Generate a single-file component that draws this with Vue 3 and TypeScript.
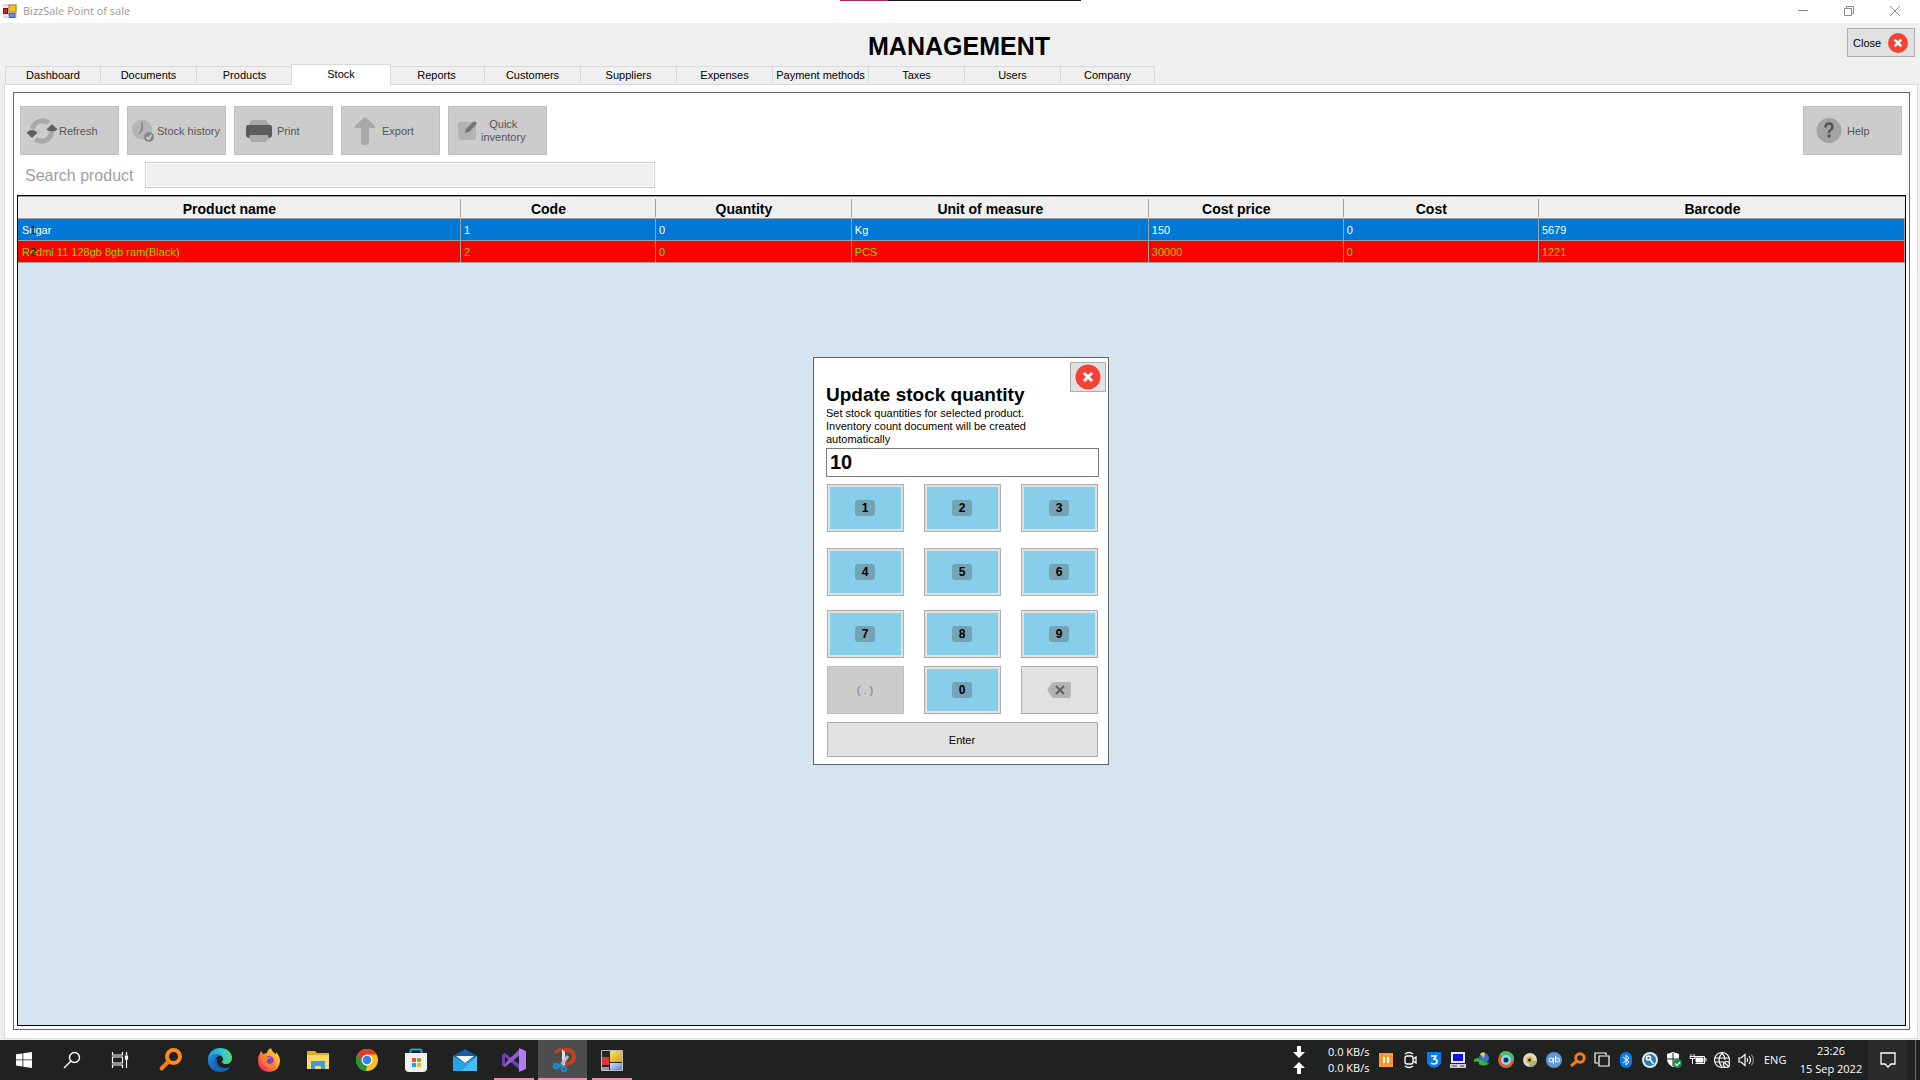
<script setup lang="ts">
import { ref } from 'vue'

interface Column {
  key: string
  label: string
  width: string
}

interface Product {
  name: string
  code: string
  quantity: string
  unit: string
  price: string
  cost: string
  barcode: string
  state: 'selected' | 'low'
}

const tabs = [
  'Dashboard', 'Documents', 'Products', 'Stock', 'Reports', 'Customers',
  'Suppliers', 'Expenses', 'Payment methods', 'Taxes', 'Users', 'Company',
]
const activeTab = ref('Stock')

const columns: Column[] = [
  { key: 'name', label: 'Product name', width: '23.47%' },
  { key: 'code', label: 'Code', width: '10.34%' },
  { key: 'quantity', label: 'Quantity', width: '10.38%' },
  { key: 'unit', label: 'Unit of measure', width: '15.74%' },
  { key: 'price', label: 'Cost price', width: '10.33%' },
  { key: 'cost', label: 'Cost', width: '10.34%' },
  { key: 'barcode', label: 'Barcode', width: '19.4%' },
]

const products: Product[] = [
  { name: 'Sugar', code: '1', quantity: '0', unit: 'Kg', price: '150', cost: '0', barcode: '5679', state: 'selected' },
  { name: 'Redmi 11 128gb 8gb ram(Black)', code: '2', quantity: '0', unit: 'PCS', price: '30000', cost: '0', barcode: '1221', state: 'low' },
]

const search = ref('')
const quantity = ref('10')
const keys = ['1', '2', '3', '4', '5', '6', '7', '8', '9', '.', '0', 'back']

function press(key: string) {
  quantity.value = key === 'back' ? quantity.value.slice(0, -1) : quantity.value + key
}

function cell(product: Product, key: string): string {
  return product[key as keyof Product]
}
</script>

<template>
  <div class="desktop">
    <div class="capture-strip"></div>

    <header class="titlebar">
      <svg class="app-icon" width="14" height="14" viewBox="0 0 14 14">
        <rect x="0" y="0" width="14" height="14" fill="#d8d8d8" />
        <rect x="6" y="1" width="7" height="7" fill="#f3c22b" stroke="#a98216" />
        <rect x="0.500" y="4.500" width="4" height="5" fill="#d8232a" stroke="#7c1014" />
        <rect x="6" y="9.500" width="6" height="4" fill="#5b8fe8" stroke="#3961b0" />
        <path d="M0 3h5M0 11h5v3" fill="none" stroke="#fff" />
      </svg>
      <span class="titlebar-text">BizzSale Point of sale</span>
      <button class="win-btn" aria-label="Minimize">
        <svg width="12" height="12" viewBox="0 0 12 12"><path d="M1 5.500h10" stroke="#8a8a8a" /></svg>
      </button>
      <button class="win-btn" aria-label="Restore">
        <svg width="12" height="12" viewBox="0 0 12 12" fill="none" stroke="#8a8a8a"><path d="M1.500 3.500h7v7h-7zM3.500 3.500v-2h7v7h-2" /></svg>
      </button>
      <button class="win-btn" aria-label="Close window">
        <svg width="12" height="12" viewBox="0 0 12 12"><path d="M1 1l10 10M11 1L1 11" stroke="#8a8a8a" /></svg>
      </button>
    </header>

    <div class="heading">
      <h1>MANAGEMENT</h1>
      <button class="close-btn">
        <span>Close</span>
        <svg width="20" height="20" viewBox="0 0 24 24">
          <circle cx="12" cy="12" r="12" fill="#f44336" />
          <path d="M8 8l8 8M16 8l-8 8" stroke="#fff" stroke-width="3" />
        </svg>
      </button>
    </div>

    <nav class="tabs" role="tablist">
      <button
        v-for="tab in tabs"
        :key="tab"
        role="tab"
        :aria-selected="tab === activeTab"
        :class="['tab', { active: tab === activeTab }]"
        @click="activeTab = tab"
      >{{ tab }}</button>
    </nav>

    <main class="page">
      <section class="panel">
        <div class="toolbar">
          <button class="tool refresh" disabled>
            <svg width="28" height="28" viewBox="0 0 28 28" fill="none">
              <path d="M4.500 12a10 10 0 0 1 16-6" stroke="#a8a8a8" stroke-width="5" />
              <path d="M23.500 15a10 10 0 0 1-16 7" stroke="#a8a8a8" stroke-width="5" />
              <path d="M-1 15q5-4 10 0q1 1-1 2l-3 3q-1 1-2 0l-3-3q-2-1-1-2z" fill="#606060" />
              <path d="M19 13q-1-1 1-2l3-3q1-1 2 0l3 3q2 1 1 2q-5 3-10 0z" fill="#606060" />
            </svg>
            <span>Refresh</span>
          </button>
          <button class="tool history" disabled>
            <svg width="28" height="28" viewBox="0 0 28 28" fill="none">
              <circle cx="13" cy="12.500" r="10" fill="#b5b5b5" />
              <path d="M13 5.500v7.500l-3 4" stroke="#8c8c8c" stroke-width="2" />
              <circle cx="20" cy="20" r="5" fill="#858585" />
              <path d="M17.500 20l2 2 3-4" stroke="#ccc" stroke-width="2" />
            </svg>
            <span>Stock history</span>
          </button>
          <button class="tool print" disabled>
            <svg width="28" height="28" viewBox="0 0 28 28">
              <path d="M7 3h14l3 4v3H4V7z" fill="#a8a8a8" />
              <path d="M2 8h24l1 2v9l-2 2H3l-2-2v-9z" fill="#5c5c5c" />
              <path d="M5 18h18l1 3-3 4H7l-3-4z" fill="#a8a8a8" />
            </svg>
            <span>Print</span>
          </button>
          <button class="tool export" disabled>
            <svg width="28" height="28" viewBox="0 0 28 28">
              <path d="M12.500 1q1.500-1 3 0L24 9q1 2-1 2h-5v14q-.500 3-4 3t-4-3V11H5q-2 0-1-2z" fill="#a8a8a8" />
            </svg>
            <span>Export</span>
          </button>
          <button class="tool inventory" disabled>
            <svg width="28" height="28" viewBox="0 0 28 28">
              <rect x="5" y="5" width="18" height="18" rx="3" fill="#b3b3b3" />
              <path d="M12 16l1-4 7-7q2-1 3 0t0 3l-7 7z" fill="#757575" />
            </svg>
            <span>Quick<br>inventory</span>
          </button>
          <button class="tool help" disabled>
            <svg width="28" height="28" viewBox="0 0 28 28" fill="none">
              <circle cx="14" cy="13.500" r="12.500" fill="#a3a3a3" />
              <path d="M10.500 10.500q0-4 3.500-4t3.500 3.500q0 2-2 3-1.500 1-1.500 3" stroke="#555" stroke-width="2.500" />
              <circle cx="14" cy="19" r="1.700" fill="#555" />
            </svg>
            <span>Help</span>
          </button>
        </div>

        <div class="search">
          <label for="product-search">Search product</label>
          <input id="product-search" v-model="search" type="text" disabled>
        </div>

        <div class="grid">
          <table>
            <colgroup>
              <col v-for="column in columns" :key="column.key" :style="{ width: column.width }">
            </colgroup>
            <thead>
              <tr>
                <th v-for="column in columns" :key="column.key" scope="col"><div>{{ column.label }}</div></th>
              </tr>
            </thead>
            <tbody>
              <tr v-for="(product, index) in products" :key="product.code" :class="product.state">
                <td v-for="(column, c) in columns" :key="column.key">
                  {{ cell(product, column.key) }}<span v-if="c === 0" class="row-number">{{ index + 1 }}</span>
                </td>
              </tr>
            </tbody>
          </table>
        </div>
      </section>
    </main>

    <div class="dialog" role="dialog" aria-labelledby="dialog-title">
      <div class="dialog-head">
        <h2 id="dialog-title">Update stock quantity</h2>
        <button class="dialog-close" aria-label="Close">
          <svg width="26" height="26" viewBox="0 0 26 26">
            <circle cx="13" cy="13" r="12.500" fill="#f44336" />
            <path d="M9 9l8 8M17 9l-8 8" stroke="#fff" stroke-width="3" />
          </svg>
        </button>
      </div>
      <p>Set stock quantities for selected product. Inventory count document will be created automatically</p>
      <input v-model="quantity" class="quantity" type="text" aria-label="Quantity">
      <div class="keypad">
        <button
          v-for="key in keys"
          :key="key"
          :class="['key', { digit: key !== '.' && key !== 'back' }]"
          :disabled="key === '.'"
          :aria-label="key === 'back' ? 'Backspace' : undefined"
          @click="press(key)"
        >
          <svg v-if="key === 'back'" width="24" height="16" viewBox="0 0 24 16">
            <path d="M7 0h14q3 0 3 3v10q0 3-3 3H7q-1 0-2-1L1 9.500q-1-1.500 0-3L5 1q1-1 2-1z" fill="#b3b3b3" />
            <path d="M9 4l8 8M17 4l-8 8" stroke="#5f5f5f" stroke-width="2" />
          </svg>
          <template v-else-if="key === '.'">( . )</template>
          <span v-else class="cap">{{ key }}</span>
        </button>
      </div>
      <button class="enter">Enter</button>
    </div>

    <footer class="taskbar">
      <button class="sys" aria-label="Start">
        <svg width="16" height="16" viewBox="0 0 16 16" fill="#fff"><path d="M0 2.300l6.500-.9v6.100H0zM7.300 1.300L16 0v7.500H7.300zM0 8.300h6.500v6.200L0 13.600zM7.300 8.300H16V16l-8.700-1.300z" /></svg>
      </button>
      <button class="sys" aria-label="Search">
        <svg width="18" height="18" viewBox="0 0 18 18" fill="none" stroke="#fff" stroke-width="1.400"><circle cx="11.500" cy="6.500" r="5" /><path d="M8 10l-7 7" /></svg>
      </button>
      <button class="sys" aria-label="Task view">
        <svg width="18" height="18" viewBox="0 0 18 18" fill="none" stroke="#fff" stroke-width="1.200"><path d="M1.500 1v3h10V1M1.500 17v-3h10v3M1.500 6h10v6h-10zM15.500 1v3M15.500 8v9" /><rect x="14.500" y="5" width="2" height="3" fill="#fff" /></svg>
      </button>
      <button class="app" aria-label="Everything">
        <svg width="24" height="24" viewBox="0 0 24 24" fill="none"><circle cx="14.500" cy="8.500" r="6.500" stroke="#ff8a1c" stroke-width="4" /><path d="M9.500 13.500l-7 7" stroke="#ff7a0c" stroke-width="4" stroke-linecap="round" /></svg>
      </button>
      <button class="app" aria-label="Edge">
        <svg width="24" height="24" viewBox="0 0 24 24">
          <defs>
            <linearGradient id="edge-top" x1="0" y1="0" x2="1" y2="0"><stop offset="0" stop-color="#1b9de2" /><stop offset=".6" stop-color="#2fc6d0" /><stop offset="1" stop-color="#62d765" /></linearGradient>
            <linearGradient id="edge-low" x1="0" y1="0" x2="1" y2="1"><stop offset="0" stop-color="#1b8be0" /><stop offset="1" stop-color="#0f4f9c" /></linearGradient>
          </defs>
          <path d="M0 12C0 4 6 0 12 0c8 0 12 5 12 10 0 4-3 6-6 6-2 0-4-.5-4-2 0-.8 1-1 1-3 0-2-2-4-5-4-5 0-9 3-10 8z" fill="url(#edge-top)" />
          <path d="M0 13c1-5 5-7 9-7 2 0 4 1 5 2-4-1-7 2-7 6 0 5 5 8 9 8 3 0 5-2 6-3-2 4-6 5-10 5C5 24 0 19 0 13z" fill="url(#edge-low)" />
          <path d="M9 13c0 5 4 7 8 7 2 0 4-.7 5-1-2 3-6 5-10 4.500C7 22 5 16 8 11c.5-1 1-1 1 2z" fill="#1765b8" />
        </svg>
      </button>
      <button class="app" aria-label="Firefox">
        <svg width="24" height="24" viewBox="0 0 24 24">
          <defs><linearGradient id="fox" x1="1" y1="0" x2="0" y2="1"><stop offset="0" stop-color="#ffe94a" /><stop offset=".45" stop-color="#ff9a2a" /><stop offset=".8" stop-color="#ff3b50" /><stop offset="1" stop-color="#e31587" /></linearGradient></defs>
          <path d="M3 5l1-2 2 3 4-1q0-3 4-5 1 4 5 6l0-2q4 4 4 9 0 10-11 11Q1 23 1 13q0-5 2-8z" fill="url(#fox)" />
          <circle cx="12" cy="13" r="5" fill="#7a43d8" />
          <path d="M4 9q4-2 6 0 3-1 4 1-3 0-4 2-1 4 3 4 4-1 4-5 3 8-5 9-7 0-8-11z" fill="#ff7a32" />
        </svg>
      </button>
      <button class="app" aria-label="File Explorer">
        <svg width="24" height="24" viewBox="0 0 24 24"><path d="M1 3h8l2 2h12v16H1z" fill="#e9a821" /><path d="M1 7h22v14H1z" fill="#ffd767" /><path d="M5 21v-8h14v8h-4v-3H9v3z" fill="#3d9be0" /></svg>
      </button>
      <button class="app" aria-label="Chrome">
        <svg width="24" height="24" viewBox="0 0 24 24">
          <circle cx="12" cy="12" r="11" fill="#fbc116" />
          <path d="M2.500 6.500A11 11 0 0 1 21.500 6.500H12L7 14z" fill="#e33b2e" />
          <path d="M2.500 6.500L8 15l4 3-1 5A11 11 0 0 1 2.500 6.500z" fill="#229342" />
          <circle cx="12" cy="12" r="5.500" fill="#fff" /><circle cx="12" cy="12" r="4.300" fill="#3b7de8" />
        </svg>
      </button>
      <button class="app" aria-label="Store">
        <svg width="24" height="24" viewBox="0 0 24 24"><path d="M6.500 6V2.500q0-1 1-1h9q1 0 1 1V6" fill="none" stroke="#2c9bd8" stroke-width="2" /><path d="M1 5h22v15q0 4-4 4H5q-4 0-4-4z" fill="#f1f1f1" /><path d="M8 10h4v4H8z" fill="#f04e23" /><path d="M13 10h4v4h-4z" fill="#7db82a" /><path d="M8 15h4v4H8z" fill="#1ca3e6" /><path d="M13 15h4v4h-4z" fill="#f7b614" /></svg>
      </button>
      <button class="app" aria-label="Mail">
        <svg width="24" height="24" viewBox="0 0 24 24"><path d="M0 8l12-7 12 7v5H0z" fill="#1160ae" /><path d="M0 8l12 7 12-7v15H0z" fill="#28a0e8" /><path d="M24 8L8 23h16z" fill="#47bdf2" /><path d="M3 8h18l-9 7z" fill="#f7f7f7" /></svg>
      </button>
      <button class="app running" aria-label="Visual Studio">
        <svg width="24" height="24" viewBox="0 0 24 24"><path d="M0 7l3-2 15 12v5L3 9v7l-3 1z" fill="#6d3fb0" /><path d="M0 17l3 2L18 7V1L6 12l-3 4z" fill="#8d5bd0" /><path d="M17 0l7 3v18l-7 3z" fill="#b57cf2" /></svg>
      </button>
      <button class="app running current" aria-label="Snipping Tool">
        <svg width="24" height="24" viewBox="0 0 24 24" fill="none"><path d="M13 2.500a7 7 0 1 1 1 13" stroke="#c8401e" stroke-width="4" /><path d="M4 5q3-4 8-3" stroke="#c8401e" stroke-width="3" /><path d="M11 1l3 3v13l-3 1z" fill="#e4e4e4" /><path d="M17 8l-7 9" stroke="#bdbdbd" stroke-width="3" /><path d="M11 16l-5 3" stroke="#2089d0" stroke-width="3" /><circle cx="5" cy="18" r="2" stroke="#2089d0" stroke-width="2.500" /><circle cx="13" cy="21" r="2.300" stroke="#2089d0" stroke-width="2" /></svg>
      </button>
      <button class="app running" aria-label="BizzSale">
        <svg width="24" height="24" viewBox="0 0 24 24">
          <defs>
            <linearGradient id="form-yellow" x1="0" y1="0" x2="1" y2="1"><stop offset="0" stop-color="#fbe27a" /><stop offset="1" stop-color="#d99e08" /></linearGradient>
            <linearGradient id="form-blue" x1="0" y1="0" x2="1" y2="1"><stop offset="0" stop-color="#d5e2fb" /><stop offset="1" stop-color="#4f7fe0" /></linearGradient>
          </defs>
          <path d="M1.500 2.500h21v20h-21z" fill="#26292a" stroke="#bcbcbc" />
          <path d="M10 3h12v11H10z" fill="url(#form-yellow)" />
          <path d="M2 9h7v8H2z" fill="#d93636" />
          <path d="M10 15h12v7H10z" fill="url(#form-blue)" />
          <path d="M2 19h7v3H2z" fill="#9a9a9a" />
        </svg>
      </button>

      <div class="net">
        <svg width="12" height="28" viewBox="0 0 12 28" fill="#fff"><path d="M4 0h4v6h4l-6 6-6-6h4z" /><path d="M4 28h4v-6h4l-6-6-6 6h4z" /></svg>
        <div><span>0.0 KB/s</span><span>0.0 KB/s</span></div>
      </div>
      <div class="tray">
        <svg viewBox="0 0 16 16"><path d="M1 1h14v14H1z" fill="#f59a2f" /><path d="M6 5v6M10 5v6" stroke="#fff" stroke-width="2" /></svg>
        <svg viewBox="0 0 16 16" fill="none" stroke="#fff" stroke-width="1.300"><rect x="3" y="4" width="8" height="8" rx="2" /><path d="M11 7l3-2v6l-3-2M3 2q4-3 8 0M3 14q4 3 8 0" /></svg>
        <svg viewBox="0 0 16 16"><path d="M1 0h14v11q-2 4-7 5-5-1-7-5z" fill="#0a7cf0" /><path d="M5 4h5L8 7q3 0 3 2.500T8 12q-2 0-3-1" fill="none" stroke="#fff" stroke-width="1.500" /></svg>
        <svg viewBox="0 0 16 16"><path d="M1 0h14v11H1z" fill="#e8e8e8" /><path d="M3 2h10v7H3z" fill="#0b12e0" /><path d="M0 12h16v4H0z" fill="#d0d0d8" /><path d="M2 14h5M10 14h4" stroke="#444" /></svg>
        <svg viewBox="0 0 16 16"><circle cx="10" cy="6" r="5" fill="#3a6fd0" /><path d="M6 2q3-3 5-1l-1 5z" fill="#f6d33a" /><path d="M0 8q4-4 5-1l3 1q5 4 8 2-4 5-9 3-3 0-2-3-3-1-5 0z" fill="#3eb33a" /></svg>
        <svg viewBox="0 0 16 16" fill="none"><circle cx="8" cy="8" r="6" stroke="#e8593a" stroke-width="4" /><path d="M3 4a6 6 0 0 1 11 4" stroke="#53b96a" stroke-width="4" /><circle cx="8" cy="8" r="5" fill="#7fe0ee" /><circle cx="8" cy="8" r="2.500" fill="#152b55" /></svg>
        <svg viewBox="0 0 16 16"><circle cx="8" cy="8" r="7" fill="#dcdccc" /><path d="M8 8l7 1a7 7 0 0 1-8 6z" fill="#aaa893" /><circle cx="7.500" cy="8" r="3.500" fill="#d9b72e" /><circle cx="7.500" cy="8" r="1.500" fill="#222" /></svg>
        <svg viewBox="0 0 16 16"><circle cx="8" cy="8" r="8" fill="#5f96d8" /><circle cx="5" cy="8" r="2" fill="none" stroke="#fff" /><path d="M7.500 6v6M9.500 4v6" stroke="#fff" /><circle cx="11.500" cy="8" r="2" fill="none" stroke="#fff" /></svg>
        <svg viewBox="0 0 16 16" fill="none" stroke="#f57c1a" stroke-width="3"><circle cx="10" cy="6" r="4.200" /><path d="M7 9l-6 5" /></svg>
        <svg viewBox="0 0 16 16" fill="none" stroke="#fff" stroke-width="1.200"><path d="M5 4h10v10H5zM4 11H1V1h11v2" /></svg>
        <svg viewBox="0 0 16 16" fill="none"><rect x="2" y="0" width="12" height="16" rx="6" fill="#0a7cf0" /><path d="M5 5l6 5-3 3V3l3 3-6 5" stroke="#fff" /></svg>
        <svg viewBox="0 0 16 16" fill="none"><circle cx="8" cy="8" r="8" fill="#d9e8f0" /><circle cx="8" cy="8" r="6" fill="#2b78b8" /><circle cx="6.500" cy="6" r="2" stroke="#fff" stroke-width="1.500" /><path d="M8 7.500l3.500 4.500" stroke="#fff" stroke-width="1.500" /></svg>
        <svg viewBox="0 0 16 16"><path d="M7 0l6 2v6q-1 5-6 7-5-2-6-7V2z" fill="#fff" /><path d="M7 1v13M1 7h12" stroke="#222" /><circle cx="11.500" cy="11.500" r="4.500" fill="#15913e" /><path d="M9 11.500l2 2 3-3.500" fill="none" stroke="#fff" stroke-width="1.300" /></svg>
        <svg viewBox="0 0 16 16" fill="none" stroke="#fff"><path d="M4.500 4.500h10v7h-9M14.500 6.500h1.500v3" /><path d="M6 6h7v4H6z" fill="#fff" /><path d="M1 2v2M4 2v2M0 4.500h5v2H0zM2.500 7v5" /></svg>
        <svg viewBox="0 0 16 16" fill="none" stroke="#fff" stroke-width="1.200"><circle cx="8" cy="8" r="7.500" /><path d="M1 6h14M1 10h9M8 1q-6 7 0 14M8 1q3 3 3 7" /><circle cx="12.500" cy="12.500" r="3" fill="#1f2221" /><path d="M10.500 10.500l4 4" /></svg>
        <svg viewBox="0 0 16 16" fill="none" stroke="#fff" stroke-width="1.200"><path d="M1 6h2l4-3.500v11L3 10H1zM9 6q1.500 2 0 4M11 4q3 4 0 8" /><path d="M13.500 2.500q4 5.500 0 11" stroke="#888" /></svg>
      </div>
      <span class="lang">ENG</span>
      <div class="clock"><span>23:26</span><span>15 Sep 2022</span></div>
      <button class="notify" aria-label="Notifications">
        <svg width="16" height="16" viewBox="0 0 16 16" fill="none" stroke="#fff" stroke-width="1.300"><path d="M1 1h14v11h-4l-3 3-3-3H1z" /></svg>
      </button>
      <div class="peek"></div>
    </footer>
  </div>
</template>

<style>
body {
  margin: 0;
}
</style>

<style scoped>
.desktop {
  position: relative;
  display: flex;
  flex-direction: column;
  min-height: 100vh;
  box-sizing: border-box;
  background: #efefef;
  color: #000;
  font: 11px/13px "Liberation Sans", sans-serif;
}

.desktop * {
  box-sizing: border-box;
}

svg {
  display: block;
  flex: none;
  overflow: visible;
}

button,
input {
  margin: 0;
  padding: 0;
  border: 0;
  border-radius: 0;
  background: none;
  color: inherit;
  font: inherit;
}

h1,
h2,
p {
  margin: 0;
}

.capture-strip {
  position: absolute;
  top: 0;
  left: calc(50% - 120px);
  width: 241px;
  height: 1px;
  background: linear-gradient(90deg, #b3205a 48px, #1a1418 48px);
}

.titlebar {
  display: flex;
  align-items: center;
  height: 23px;
  padding: 0 2px 1px 3px;
  background: #fff;
}

.titlebar-text {
  flex: 1;
  padding-left: 6px;
  color: #999;
  font: 11px/16px "Open Sans", sans-serif;
}

.win-btn {
  display: flex;
  align-items: center;
  justify-content: center;
  width: 46px;
  height: 20px;
}

.heading {
  display: grid;
  grid-template-columns: 1fr auto 1fr;
  align-items: start;
  height: 41px;
  padding: 5px 5px 0 3px;
}

h1 {
  grid-column: 2;
  font-size: 25px;
  line-height: 36px;
}

.close-btn {
  display: flex;
  align-items: center;
  justify-content: space-between;
  justify-self: end;
  width: 68px;
  height: 29px;
  padding: 1px 6px 0 5px;
  border: 1px solid #adadad;
  background: #e1e1e1;
}

.tabs {
  display: flex;
  align-items: flex-end;
  height: 21px;
  padding-left: 5px;
  z-index: 1;
}

.tab {
  width: 96px;
  height: 19px;
  border: 1px solid #d9d9d9;
  border-left: 0;
  white-space: nowrap;
}

.tab:first-child {
  border-left: 1px solid #d9d9d9;
}

.tab:last-child {
  width: 94px;
}

.tab.active {
  position: relative;
  width: 100px;
  height: 21px;
  margin: 0 -2px;
  padding-bottom: 1px;
  border-left: 1px solid #d9d9d9;
  border-bottom: 0;
  background: #fff;
}

.page {
  display: flex;
  flex: 1;
  margin: -1px 2px 1px 4px;
  padding: 7px 7px 8px 8px;
  border: 1px solid #dcdcdc;
  background: #fff;
}

.panel {
  display: flex;
  flex: 1;
  flex-direction: column;
  padding: 13px 3px 3px;
  border: 1px solid #646464;
}

.toolbar {
  display: flex;
  gap: 8px;
  padding: 0 4px 0 3px;
}

.tool {
  display: flex;
  align-items: center;
  gap: 4px;
  width: 99px;
  height: 49px;
  padding: 0 0 0 10px;
  border: 1px solid #bfbfbf;
  background: #ccc;
  color: #555;
  text-align: center;
}

.tool span {
  padding-top: 1px;
}

.tool.refresh {
  gap: 3px;
  padding-left: 7px;
}

.tool.history {
  gap: 0;
  padding-left: 1px;
}

.tool.export {
  gap: 3px;
  padding-left: 9px;
}

.tool.inventory {
  gap: 0;
  padding-left: 4px;
}

.tool.help {
  margin-left: auto;
  padding-left: 11px;
}

.search {
  display: flex;
  align-items: center;
  margin-top: 7px;
}

.search label {
  width: 128px;
  padding: 1px 0 0 8px;
  color: #a0a0a0;
  font-size: 16px;
  line-height: 20px;
}

.search input {
  width: 510px;
  height: 26px;
  border: 1px solid #ccc;
  background: #efefef;
  box-shadow: inset 0 0 0 1px #fff;
}

.grid {
  flex: 1;
  margin-top: 7px;
  border: 1px solid #000;
  background: #d6e4f1;
}

table {
  width: 100%;
  table-layout: fixed;
  border-collapse: separate;
  border-spacing: 0;
}

th {
  height: 23px;
  padding: 0;
  border-top: 1px solid #a0a0a0;
  border-bottom: 1px solid #a0a0a0;
  background: #efefef;
  font-size: 14px;
  line-height: 16px;
}

th div {
  padding: 2px 19px 0 0;
  border-right: 1px solid #a0a0a0;
}

th:last-child div {
  border-right: 0;
}

td {
  height: 22px;
  padding: 1px 3px 0;
  border-right: 1px solid #a0a0a0;
  border-bottom: 1px solid #a0a0a0;
}

td:first-child {
  position: relative;
  padding-left: 4px;
}

.selected td {
  background: #0078d7;
  color: #fff;
}

.low td {
  background: #f00;
  color: #86d800;
}

.row-number {
  position: absolute;
  left: 12px;
  color: #111;
}

.dialog {
  position: absolute;
  top: 357px;
  left: calc(50% - 147px);
  width: 296px;
  padding: 4px 2px 7px 12px;
  border: 1px solid #646464;
  background: #fff;
}

.dialog-head {
  display: flex;
  justify-content: space-between;
  height: 45px;
}

h2 {
  align-self: flex-end;
  font-size: 19px;
  line-height: 24px;
}

.dialog-close {
  display: flex;
  align-items: center;
  justify-content: center;
  width: 36px;
  height: 30px;
  border: 1px solid #adadad;
  background: #e1e1e1;
}

.dialog p {
  width: 220px;
}

.quantity {
  display: block;
  width: 273px;
  height: 29px;
  margin-top: 2px;
  padding: 0 3px;
  border: 1px solid #7a7a7a;
  background: #fff;
  font-size: 20px;
  font-weight: bold;
}

.keypad {
  display: grid;
  grid-template-columns: repeat(3, 77px);
  grid-template-rows: 56px 54px 48px 48px;
  gap: 8px 20px;
  margin: 7px 0 0 1px;
}

.key {
  display: flex;
  align-items: center;
  justify-content: center;
  height: 48px;
  padding-right: 1px;
  border: 1px solid #adadad;
  background: #e1e1e1;
}

.key.digit {
  background: #87ceeb;
  box-shadow: inset 0 0 0 2px #e1e1e1;
}

.key:disabled {
  border-color: #bfbfbf;
  background: #ccc;
  color: #777;
}

.cap {
  width: 20px;
  border-radius: 3px;
  background: #73a3b5;
  font-size: 12px;
  font-weight: bold;
  line-height: 16px;
}

.enter {
  display: block;
  width: 271px;
  height: 35px;
  margin: 8px 0 0 1px;
  padding: 1px 1px 0 0;
  border: 1px solid #adadad;
  background: #e1e1e1;
}

.taskbar {
  display: flex;
  align-items: center;
  height: 40px;
  background: #1f2221;
  color: #fff;
  font: 11px/16px "Open Sans", sans-serif;
}

.sys,
.app {
  display: flex;
  align-items: center;
  justify-content: center;
  width: 48px;
  height: 40px;
}

.app {
  width: 49px;
}

.sys + .app {
  margin-left: 2px;
}

.running {
  background: linear-gradient(#f08cb0, #f08cb0) center bottom / 40px 2px no-repeat;
}

.running.current {
  background: linear-gradient(#f08cb0, #f08cb0) center bottom / 49px 2px no-repeat #4b4e4d;
}

.net {
  display: flex;
  align-items: center;
  gap: 23px;
  width: 81px;
  margin-left: auto;
}

.net span,
.clock span {
  display: block;
  white-space: nowrap;
}

.tray {
  display: flex;
  gap: 8px;
  margin: 0 10px 0 4px;
}

.tray svg {
  width: 16px;
  height: 16px;
}

.lang {
  width: 30px;
}

.clock {
  width: 74px;
  text-align: center;
}

.clock span {
  line-height: 18px;
}

.notify {
  display: flex;
  align-items: center;
  justify-content: center;
  width: 39px;
  height: 40px;
  background: #292c2b;
}

.peek {
  width: 5px;
  height: 40px;
  margin-left: 8px;
  border-left: 1px solid #6c6e6d;
}
</style>
